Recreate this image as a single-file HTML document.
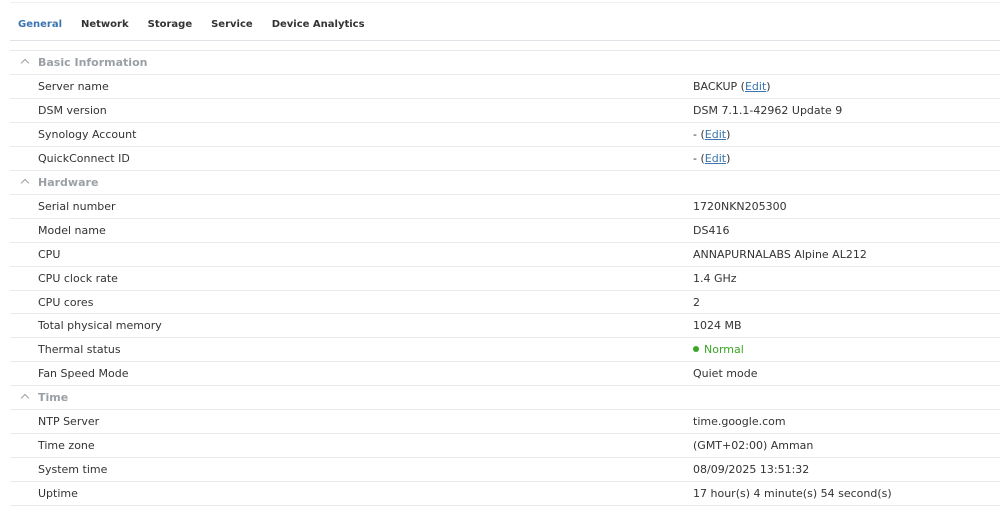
<!DOCTYPE html>
<html><head><style>
body{margin:0;width:1000px;height:532px;background:#fff;font-family:"DejaVu Sans",Verdana,sans-serif;font-size:11px;color:#333;overflow:hidden;position:relative}
.top{position:absolute;left:10px;right:0;top:2px;border-top:1px solid #eef0f2}
.tabs{position:absolute;left:18px;top:19px;font-weight:bold;font-size:10px}
.tabs span{margin-right:19px;color:#333}
.tabs span.a{color:#3a75b0}
.tl{position:absolute;left:10px;right:0;top:40px;border-top:1px solid #dfe3e7}
.tbl{position:absolute;left:10px;right:0;top:50px;border-top:1px solid #e6e9ec}
.r{height:22.96px;border-bottom:1px solid #e8ebee;position:relative;line-height:23px}
.r .l{position:absolute;left:28px}
.r .v{position:absolute;left:683px}
.h{color:#9aa0a6;font-weight:bold}
.h .l{left:28px}
.chev{position:absolute;left:12px;top:9px;width:5px;height:5px;border-left:1px solid #9aa0a6;border-top:1px solid #9aa0a6;transform:rotate(45deg)}
a{color:#3a75b0;text-decoration:underline}
.dot{display:inline-block;width:6px;height:6px;border-radius:50%;background:#3aa626;margin-right:5px;vertical-align:1px}
.g{color:#3aa626}
</style></head><body>
<div class="top"></div>
<div class="tabs"><span class="a">General</span><span>Network</span><span>Storage</span><span>Service</span><span>Device Analytics</span></div>
<div class="tl"></div>
<div class="tbl">
<div class="r h"><i class="chev"></i><span class="l">Basic Information</span></div>
<div class="r"><span class="l">Server name</span><span class="v">BACKUP (<a>Edit</a>)</span></div>
<div class="r"><span class="l">DSM version</span><span class="v">DSM 7.1.1-42962 Update 9</span></div>
<div class="r"><span class="l">Synology Account</span><span class="v">- (<a>Edit</a>)</span></div>
<div class="r"><span class="l">QuickConnect ID</span><span class="v">- (<a>Edit</a>)</span></div>
<div class="r h"><i class="chev"></i><span class="l">Hardware</span></div>
<div class="r"><span class="l">Serial number</span><span class="v">1720NKN205300</span></div>
<div class="r"><span class="l">Model name</span><span class="v">DS416</span></div>
<div class="r"><span class="l">CPU</span><span class="v">ANNAPURNALABS Alpine AL212</span></div>
<div class="r"><span class="l">CPU clock rate</span><span class="v">1.4 GHz</span></div>
<div class="r"><span class="l">CPU cores</span><span class="v">2</span></div>
<div class="r"><span class="l">Total physical memory</span><span class="v">1024 MB</span></div>
<div class="r"><span class="l">Thermal status</span><span class="v g"><i class="dot"></i>Normal</span></div>
<div class="r"><span class="l">Fan Speed Mode</span><span class="v">Quiet mode</span></div>
<div class="r h"><i class="chev"></i><span class="l">Time</span></div>
<div class="r"><span class="l">NTP Server</span><span class="v">time.google.com</span></div>
<div class="r"><span class="l">Time zone</span><span class="v">(GMT+02:00) Amman</span></div>
<div class="r"><span class="l">System time</span><span class="v">08/09/2025 13:51:32</span></div>
<div class="r"><span class="l">Uptime</span><span class="v">17 hour(s) 4 minute(s) 54 second(s)</span></div>
</div>
</body></html>
